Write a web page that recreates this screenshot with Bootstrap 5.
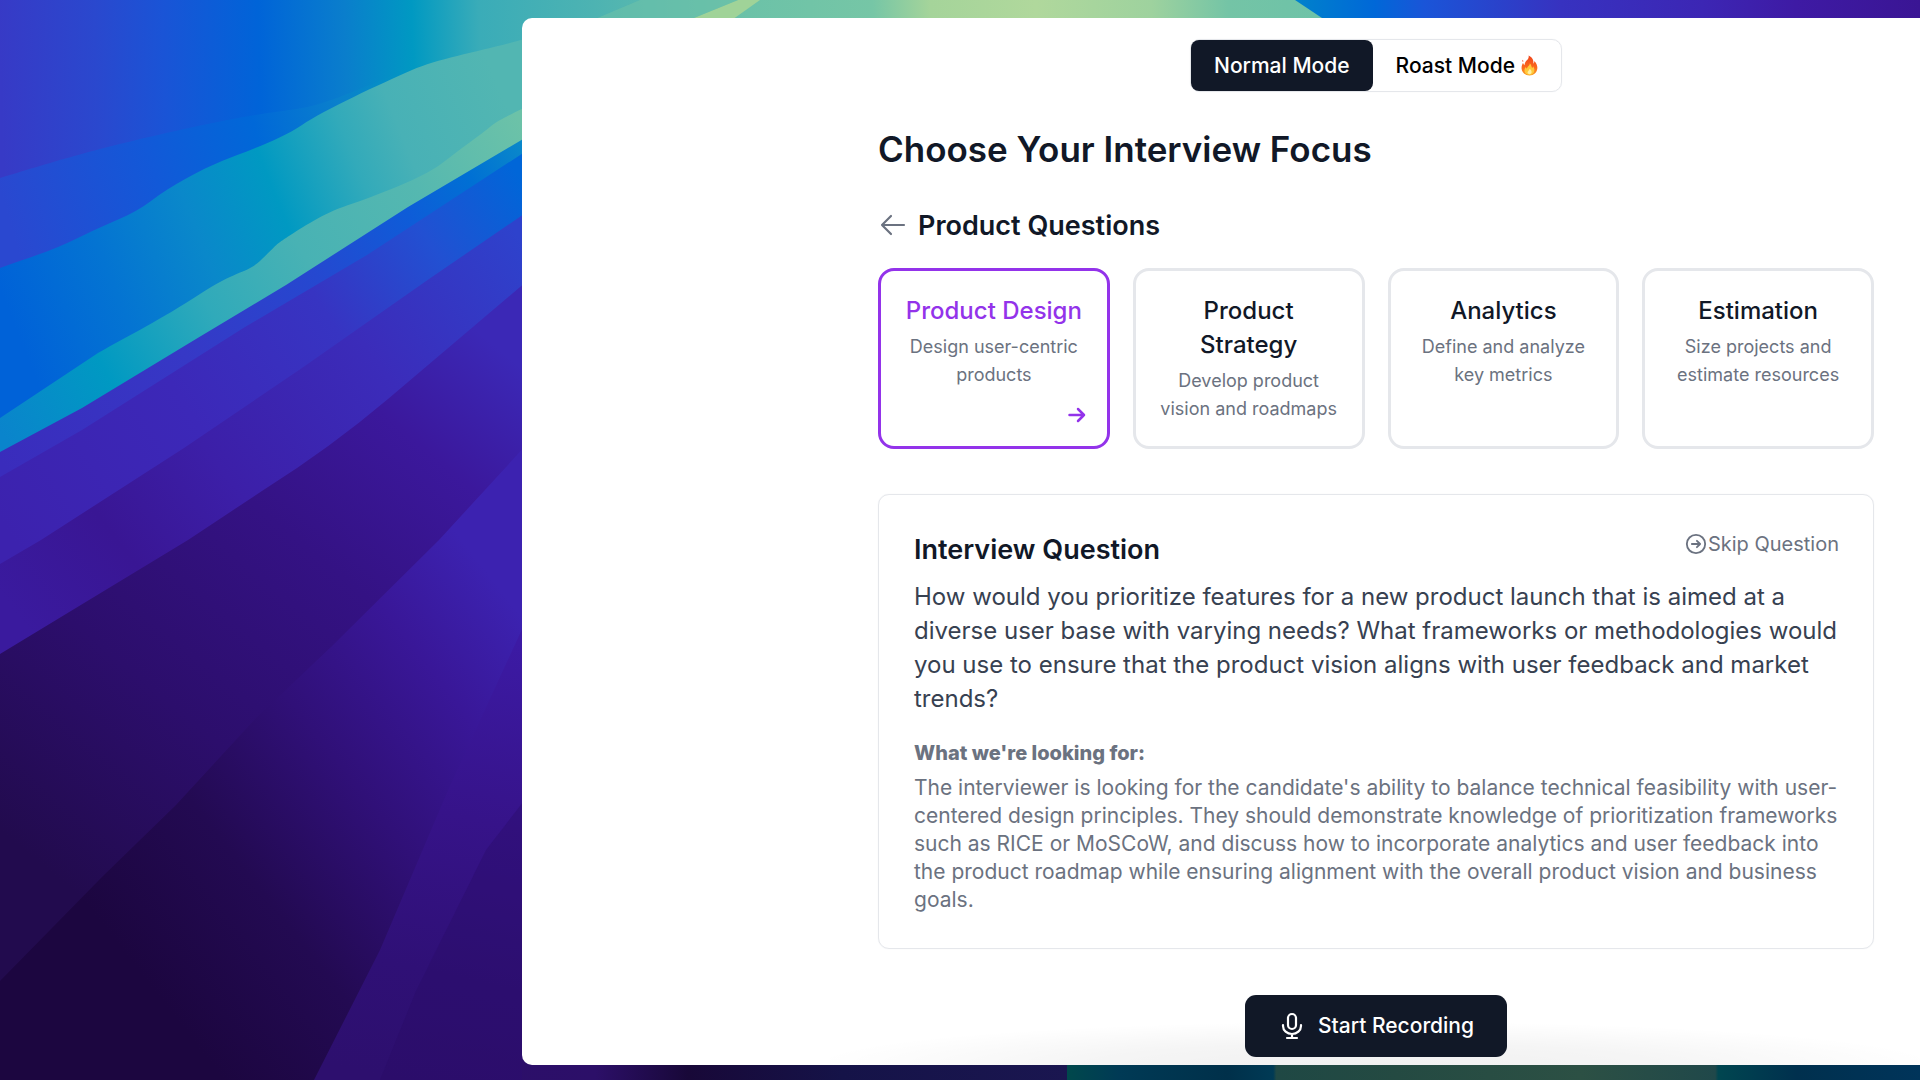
<!DOCTYPE html>
<html lang="en">
<head>
<meta charset="utf-8">
<meta name="viewport" content="width=device-width, initial-scale=1">
<title>Interview Practice</title>
<link href="https://cdn.jsdelivr.net/npm/bootstrap@5.3.0/dist/css/bootstrap.min.css" rel="stylesheet">
<style>
  :root { --ink: #111827; --muted: #6b7280; --line: #e5e7eb; --accent: #9333ea; }
  body { font-family: Inter, "Open Sans", sans-serif; color: var(--ink); background: #2a0e68; }
  .wallpaper { z-index: -1; }
  .desk { padding: 18px 0 15px 27.2%; }
  .app-window { background: #fff; border-radius: 10px 0 0 10px; padding: 21px 46px 8px; overflow: hidden; }
  .dock-shade { left: 22%; right: 0; height: 44px; background: radial-gradient(ellipse 52% 100% at 50% 100%, rgba(0,0,0,.06), rgba(0,0,0,.04) 50%, rgba(0,0,0,0)); }
  .content-col { max-width: 996px; }
  .mode-switch { border: 1px solid var(--line); border-radius: 10px; box-shadow: 0 0 1px var(--line); }
  .mode-btn { height: 51px; border: 0; border-radius: 8px; padding: 0 23px; font-size: 21px; font-weight: 500; color: #000; background: none; gap: 6px; }
  .mode-btn.active { background: var(--ink); color: #fff; }
  .page-title { font-size: 35px; line-height: 44px; font-weight: 600; margin: 35px 0 38px; }
  .section-title { font-size: 27px; line-height: 34px; font-weight: 600; }
  .section-head { gap: 10px; }
  .plain-btn { border: 0; background: none; padding: 0; color: var(--muted); }
  .focus-grid { gap: 23px; margin: 25px 0 45px; }
  .focus-card { flex: 1 1 0; border: 3px solid var(--line); border-radius: 16px; background: #fff; color: var(--ink); padding: 23px 20px; }
  .focus-card.selected { border-color: var(--accent); }
  .focus-card.selected .focus-name, .focus-card .go { color: var(--accent); }
  .focus-name { font-size: 24px; line-height: 34px; font-weight: 500; }
  .focus-text { font-size: 18px; line-height: 28px; color: var(--muted); margin-top: 5px; }
  .go { right: 20px; bottom: 21px; }
  .question-box { border: 1px solid var(--line); border-radius: 11px; padding: 38px 34px 34px 35px; box-shadow: 0 0 1px var(--line); }
  .question-text { font-size: 24px; line-height: 34px; color: #374151; margin: 13px 0 23px; }
  .hint-title { font-size: 20px; line-height: 28px; font-weight: 800; color: var(--muted); margin: 0 0 7px; }
  .hint-text { font-size: 21px; line-height: 28px; color: var(--muted); }
  .skip-btn { font-size: 20px; line-height: 22px; gap: 1px; }
  .record-btn { height: 62px; border: 0; border-radius: 11px; background: var(--ink); color: #fff; font-size: 21px; font-weight: 500; padding: 0 33px; gap: 12px; margin-top: 46px; }
  svg { flex: none; }
</style>
</head>
<body class="min-vh-100">
<svg class="wallpaper position-fixed top-0 start-0 w-100 h-100" viewBox="0 0 1920 1080" preserveAspectRatio="xMinYMin slice" aria-hidden="true">
  <defs>
    <linearGradient id="sky" gradientUnits="userSpaceOnUse" x1="0" y1="60" x2="1920" y2="0">
      <stop offset="0" stop-color="#373ac6"/><stop offset=".05" stop-color="#2a48ce"/><stop offset=".085" stop-color="#1a54d6"/><stop offset=".135" stop-color="#0064d8"/><stop offset=".18" stop-color="#0a7ecc"/><stop offset=".215" stop-color="#0099c2"/><stop offset=".25" stop-color="#3aacb8"/><stop offset=".31" stop-color="#4db3b2"/><stop offset=".39" stop-color="#6cc2a8"/><stop offset=".455" stop-color="#76c6a6"/><stop offset=".485" stop-color="#a5d49a"/><stop offset=".54" stop-color="#b0d89c"/><stop offset=".6" stop-color="#9ed29e"/><stop offset=".64" stop-color="#74c4a6"/><stop offset=".7" stop-color="#6cc2a8"/>
    </linearGradient>
    <linearGradient id="skyRight" gradientUnits="userSpaceOnUse" x1="1300" y1="0" x2="1920" y2="0">
      <stop offset="0" stop-color="#0080cc"/><stop offset=".12" stop-color="#0068d8"/><stop offset=".2" stop-color="#1a55d8"/><stop offset=".42" stop-color="#3732c0"/><stop offset=".65" stop-color="#3c26b4"/><stop offset=".8" stop-color="#3e1aa4"/><stop offset="1" stop-color="#3a1594"/>
    </linearGradient>
    <linearGradient id="ridge" gradientUnits="userSpaceOnUse" x1="0" y1="190" x2="420" y2="70">
      <stop offset="0" stop-color="#2a48d0"/><stop offset=".35" stop-color="#1259d8"/><stop offset=".6" stop-color="#0068d8"/><stop offset=".8" stop-color="#0a80cc"/><stop offset="1" stop-color="#0099c2"/>
    </linearGradient>
    <linearGradient id="teal" gradientUnits="userSpaceOnUse" x1="0" y1="290" x2="500" y2="90">
      <stop offset="0" stop-color="#0062d8"/><stop offset=".2" stop-color="#0474d2"/><stop offset=".38" stop-color="#0a88ca"/><stop offset=".54" stop-color="#0099c2"/><stop offset=".7" stop-color="#32aaba"/><stop offset=".8" stop-color="#48b1b6"/><stop offset="1" stop-color="#52b6b2"/>
    </linearGradient>
    <linearGradient id="mint" gradientUnits="userSpaceOnUse" x1="0" y1="430" x2="522" y2="125">
      <stop offset="0" stop-color="#0a84cc"/><stop offset=".2" stop-color="#0099c2"/><stop offset=".4" stop-color="#30aaba"/><stop offset=".58" stop-color="#48b2b4"/><stop offset=".8" stop-color="#55b8b0"/><stop offset="1" stop-color="#6cc2a8"/>
    </linearGradient>
    <linearGradient id="rim" gradientUnits="userSpaceOnUse" x1="0" y1="460" x2="522" y2="145">
      <stop offset="0" stop-color="#3a2cbc"/><stop offset=".35" stop-color="#3638c6"/><stop offset=".6" stop-color="#2548d0"/><stop offset=".78" stop-color="#0e5cd8"/><stop offset=".9" stop-color="#0070d4"/><stop offset="1" stop-color="#0a88ca"/>
    </linearGradient>
    <linearGradient id="blue" gradientUnits="userSpaceOnUse" x1="0" y1="520" x2="522" y2="180">
      <stop offset="0" stop-color="#3c22ae"/><stop offset=".35" stop-color="#3c28b8"/><stop offset=".62" stop-color="#3734c2"/><stop offset=".82" stop-color="#2250d2"/><stop offset="1" stop-color="#0066d8"/>
    </linearGradient>
    <linearGradient id="indigo" gradientUnits="userSpaceOnUse" x1="20" y1="620" x2="522" y2="240">
      <stop offset="0" stop-color="#3a1a9e"/><stop offset=".2" stop-color="#391694"/><stop offset=".4" stop-color="#3c1fa8"/><stop offset=".7" stop-color="#3b2cba"/><stop offset="1" stop-color="#2e42cc"/>
    </linearGradient>
    <linearGradient id="violet" gradientUnits="userSpaceOnUse" x1="60" y1="880" x2="500" y2="350">
      <stop offset="0" stop-color="#220b4e"/><stop offset=".3" stop-color="#2c0e6c"/><stop offset=".6" stop-color="#341284"/><stop offset=".82" stop-color="#3b189c"/><stop offset="1" stop-color="#3b28b6"/>
    </linearGradient>
    <linearGradient id="night" gradientUnits="userSpaceOnUse" x1="130" y1="960" x2="540" y2="640">
      <stop offset="0" stop-color="#1c0640"/><stop offset=".28" stop-color="#230a52"/><stop offset=".55" stop-color="#301078"/><stop offset=".8" stop-color="#391798"/><stop offset="1" stop-color="#3c22b0"/>
    </linearGradient>
    <linearGradient id="fold" gradientUnits="userSpaceOnUse" x1="500" y1="640" x2="400" y2="1080">
      <stop offset="0" stop-color="#3c1aa4"/><stop offset=".4" stop-color="#361389"/><stop offset=".75" stop-color="#2f1076"/><stop offset="1" stop-color="#2d0f6e"/>
    </linearGradient>
    <linearGradient id="floor" gradientUnits="userSpaceOnUse" x1="380" y1="0" x2="1920" y2="0">
      <stop offset="0" stop-color="#2c0e6c"/><stop offset=".14" stop-color="#2c0f68"/><stop offset=".2" stop-color="#180838"/><stop offset=".3" stop-color="#151348"/><stop offset=".446" stop-color="#1a1650"/><stop offset=".446" stop-color="#00484c"/><stop offset=".48" stop-color="#003a55"/><stop offset=".55" stop-color="#00304a"/><stop offset=".58" stop-color="#003a55"/>
      <stop offset=".582" stop-color="#1f4844"/><stop offset=".66" stop-color="#244a42"/><stop offset=".78" stop-color="#2c5044"/><stop offset=".867" stop-color="#20484a"/><stop offset=".869" stop-color="#004650"/><stop offset=".92" stop-color="#00304e"/><stop offset="1" stop-color="#00345a"/>
    </linearGradient>
  </defs>
  <path fill="url(#sky)" d="M0 0H1920V180H0Z"/>
  <path fill="#a0d398" d="M738 0H760L729 22H684Z"/>
  <path fill="#6cc2a8" opacity=".6" d="M640 0H738L684 22H588Z"/>
  <path fill="url(#skyRight)" d="M1295 0H1920V40H1355Z"/>
  <path fill="url(#ridge)" d="M0 178C60 160 90 150 184 129S290 113 322 103S390 75 412 70L412 300H0Z"/>
  <path fill="url(#teal)" d="M0 268C30 257 55 250 82 236S130 217 151 201S200 170 222 161S280 140 302 125S380 84 412 70S500 48 540 34V300L0 470Z"/>
  <path fill="url(#mint)" d="M0 418L98 353C130 335 160 320 200 294S245 275 261 260S275 245 286 238S320 215 343 207S420 180 441 164S480 135 490 127S510 115 540 100V200L0 470Z"/>
  <path fill="url(#rim)" d="M0 452L82 408L196 339L286 285L408 207L540 129V300L0 560Z"/>
  <path fill="url(#blue)" d="M0 477L82 430L245 327L367 255L540 142V400L0 640Z"/>
  <path fill="url(#indigo)" d="M0 564L41 540L184 448L302 368L429 279L540 203V400L0 720Z"/>
  <path fill="url(#violet)" d="M0 654L188 540L265 489Q330 448 388 399L540 270V1080H0Z"/>
  <path fill="url(#night)" d="M0 981L102 877L176 805L257 717L331 647L439 540L540 430V1080H0Z"/>
  <path fill="url(#fold)" d="M314 1080L380 950L449 788L540 590V1080Z"/>
  <path fill="#280c64" opacity=".35" d="M380 1080L416 991L486 850L540 780V1080Z"/>
  <path fill="url(#floor)" d="M522 1058H1920V1080H522Z"/>
</svg>

<div class="desk min-vh-100 d-flex">
  <main class="app-window flex-grow-1 position-relative">
    <div class="dock-shade position-absolute bottom-0" aria-hidden="true"></div>
    <div class="content-col ms-auto position-relative">
      <div class="d-flex justify-content-center">
        <div class="mode-switch d-inline-flex" role="group" aria-label="Interview mode">
          <button type="button" class="mode-btn active" aria-pressed="true">Normal Mode</button>
          <button type="button" class="mode-btn d-flex align-items-center" aria-pressed="false">Roast Mode
            <svg width="17" height="21" viewBox="0 0 18 21" aria-hidden="true">
              <defs><linearGradient id="flame" x1="0" y1="0" x2="0" y2="1"><stop offset="0" stop-color="#f0431c"/><stop offset=".6" stop-color="#fb6a1c"/><stop offset="1" stop-color="#f9a224"/></linearGradient></defs>
              <path fill="url(#flame)" d="M8 0C13 2.300 13.500 6 13 8.600C14 8 14.200 7 14 5.800C16.500 8.200 17.500 11 17.300 13.400C17 18 13.500 21 9 21C4.500 21 .8 18 .6 13.600C.5 10.800 1.500 9 2.200 7.600C2.600 9 3 9.700 3.700 10.300C4 7.400 5 6 6.800 4.400C8 3.200 8.500 1.800 8 0Z"/>
              <path fill="#f0431c" d="M1.500 4.500Q3 5.500 2.200 7Q1 6 1.500 4.500Z"/>
              <path fill="#ffc83a" d="M9.300 8C11.500 10.500 11 12 11.800 13C12.600 12.600 12.800 12 12.800 11.200C14.500 13.500 14.600 16 13.500 18C12.500 19.700 11 20.400 9 20.400C6 20.400 3.600 18.500 3.700 15.600C3.700 14.200 4.300 13 5 12.200C5.300 13.100 5.700 13.600 6.300 13.900C6.500 11.300 9.500 10.500 9.300 8Z"/>
              <path fill="#fff0a0" d="M9.200 14C11.500 16 11.500 17.500 11 18.700C10 20.200 7.600 20 7 18.500C6.500 17 8.700 16 9.200 14Z"/>
            </svg>
          </button>
        </div>
      </div>

      <h1 class="page-title">Choose Your Interview Focus</h1>

      <div class="section-head d-flex align-items-center">
        <button type="button" class="plain-btn d-flex" aria-label="Back">
          <svg width="30" height="30" viewBox="0 0 30 30" fill="none" stroke="currentColor" stroke-width="2.200" stroke-linecap="round" stroke-linejoin="round" aria-hidden="true"><path d="M26 14H4M13 5L4 14L13 23"/></svg>
        </button>
        <h2 class="section-title mb-0">Product Questions</h2>
      </div>

      <div class="focus-grid d-flex">
        <button type="button" class="focus-card selected position-relative d-flex flex-column align-items-center" aria-pressed="true">
          <span class="focus-name">Product Design</span>
          <span class="focus-text">Design user-centric products</span>
          <svg class="go position-absolute" width="20" height="20" viewBox="0 0 20 20" fill="none" stroke="currentColor" stroke-width="2.500" stroke-linecap="round" stroke-linejoin="round" aria-hidden="true"><path d="M2.500 10H17M11 4L17 10L11 16"/></svg>
        </button>
        <button type="button" class="focus-card d-flex flex-column align-items-center" aria-pressed="false">
          <span class="focus-name">Product<br>Strategy</span>
          <span class="focus-text">Develop product vision and roadmaps</span>
        </button>
        <button type="button" class="focus-card d-flex flex-column align-items-center" aria-pressed="false">
          <span class="focus-name">Analytics</span>
          <span class="focus-text">Define and analyze key metrics</span>
        </button>
        <button type="button" class="focus-card d-flex flex-column align-items-center" aria-pressed="false">
          <span class="focus-name">Estimation</span>
          <span class="focus-text">Size projects and estimate resources</span>
        </button>
      </div>

      <section class="question-box">
        <div class="d-flex justify-content-between align-items-start">
          <h2 class="section-title mb-0">Interview Question</h2>
          <button type="button" class="plain-btn skip-btn d-flex align-items-center">
            <svg width="22" height="22" viewBox="0 0 24 24" fill="none" stroke="currentColor" stroke-width="2" stroke-linecap="round" stroke-linejoin="round" aria-hidden="true"><circle cx="12" cy="12" r="10"/><path d="M7.500 12H16.500M13 8.500L16.500 12L13 15.500"/></svg>
            Skip Question
          </button>
        </div>
        <p class="question-text">How would you prioritize features for a new product launch that is aimed at a diverse user base with varying needs? What frameworks or methodologies would you use to ensure that the product vision aligns with user feedback and market trends?</p>
        <h3 class="hint-title">What we're looking for:</h3>
        <p class="hint-text mb-0">The interviewer is looking for the candidate's ability to balance technical feasibility with user-centered design principles. They should demonstrate knowledge of prioritization frameworks such as RICE or MoSCoW, and discuss how to incorporate analytics and user feedback into the product roadmap while ensuring alignment with the overall product vision and business goals.</p>
      </section>

      <div class="d-flex justify-content-center">
        <button type="button" class="record-btn d-flex align-items-center">
          <svg width="28" height="28" viewBox="0 0 28 28" fill="none" stroke="currentColor" stroke-width="2.200" stroke-linecap="round" stroke-linejoin="round" aria-hidden="true"><rect x="10" y="2" width="8" height="15" rx="4"/><path d="M5 13V14A9 8 0 0 0 23 14V13M14 22V26M9 26H19"/></svg>
          Start Recording
        </button>
      </div>
    </div>
  </main>
</div>
<script src="https://cdn.jsdelivr.net/npm/bootstrap@5.3.0/dist/js/bootstrap.bundle.min.js"></script>
</body>
</html>
